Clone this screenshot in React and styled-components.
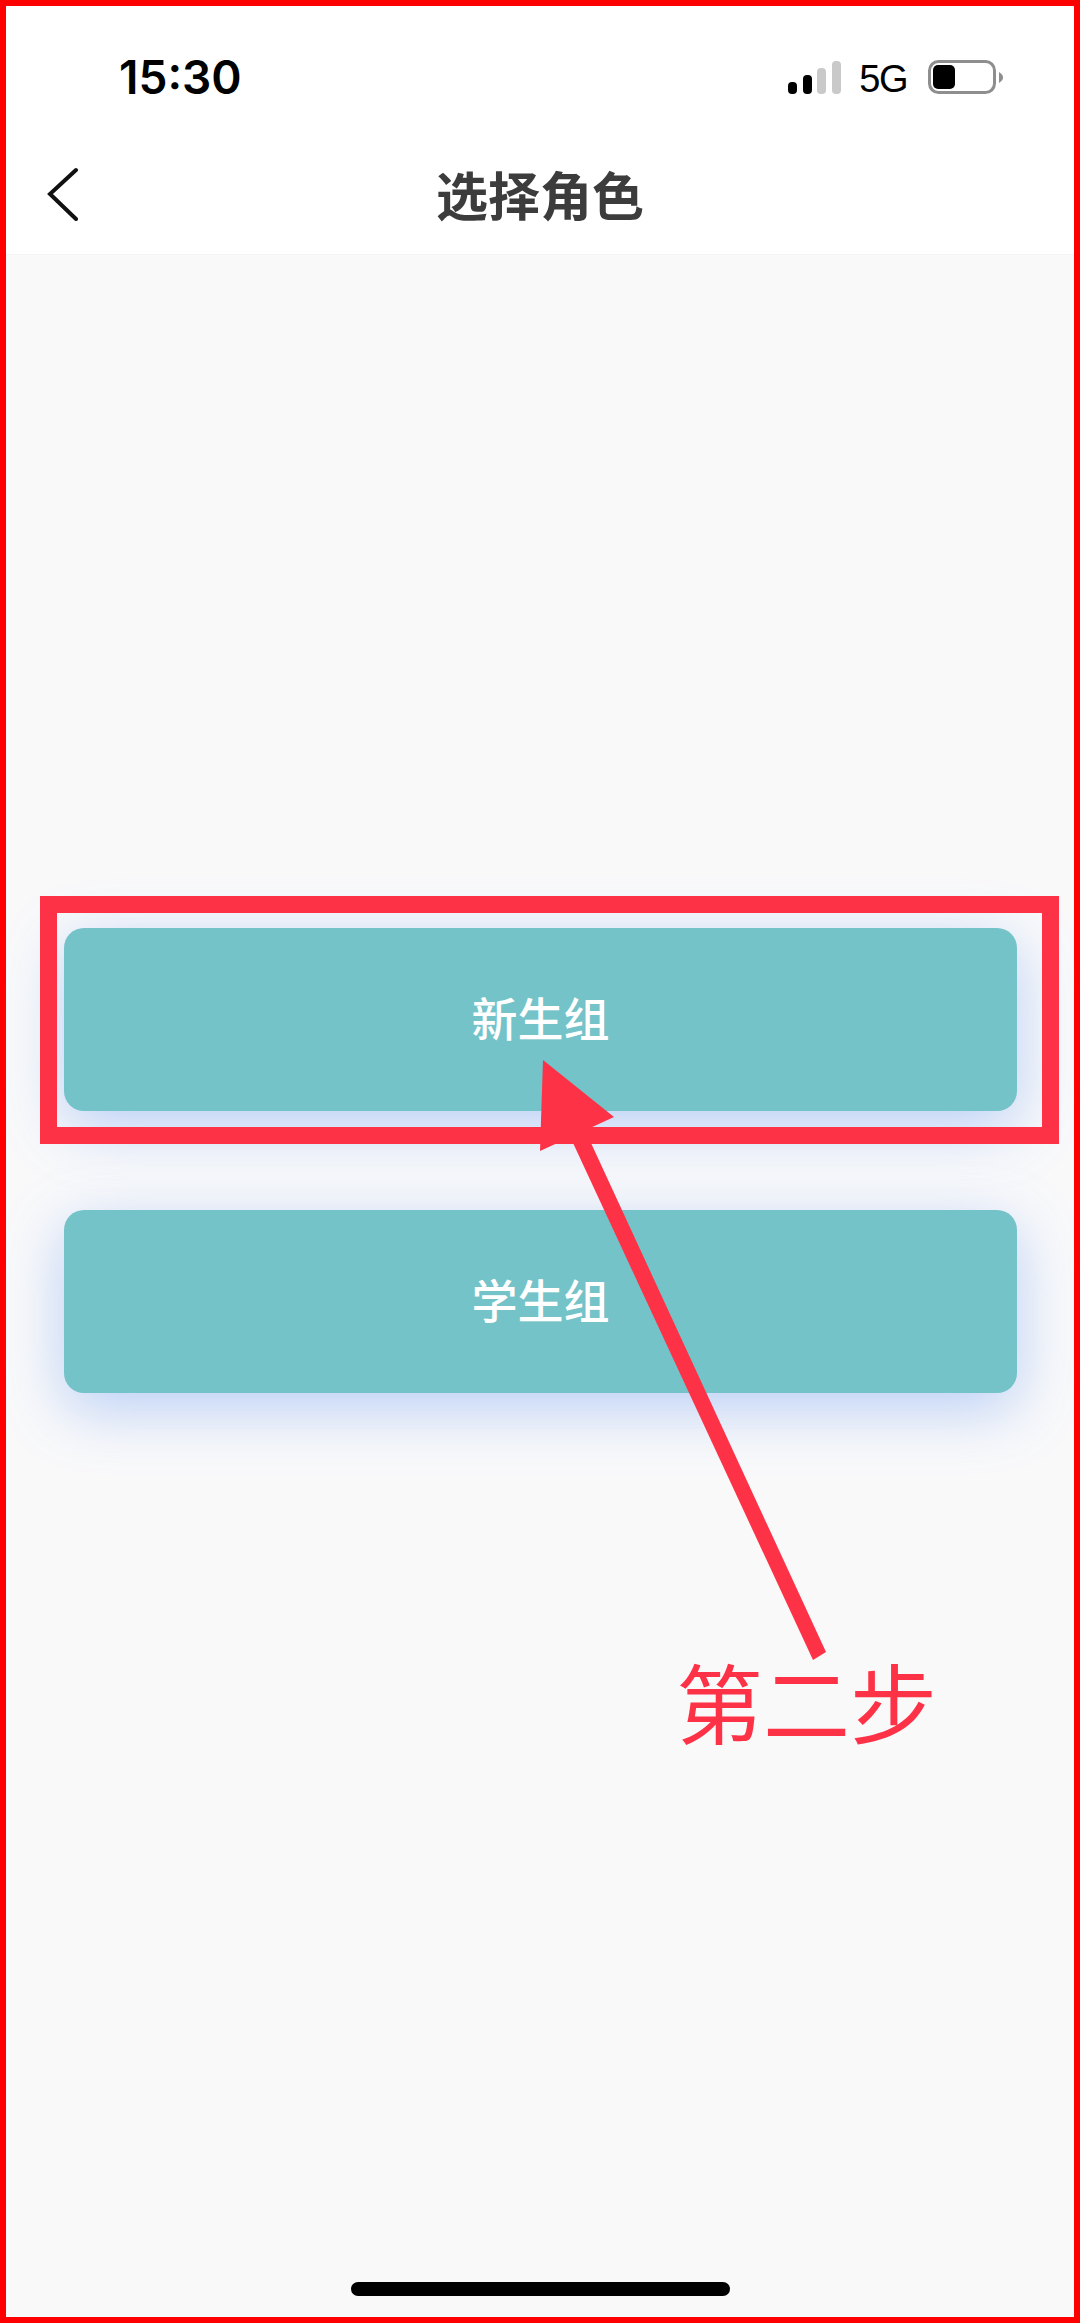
import React from "react";
import styled, { createGlobalStyle } from "styled-components";

const GlobalStyle = createGlobalStyle`
  html, body {
    margin: 0;
    padding: 0;
    background: #fff;
  }
  * {
    box-sizing: border-box;
  }
`;

const CJK = `"Noto Sans CJK SC", "Noto Sans", sans-serif`;

const Page = styled.div`
  position: relative;
  width: 1080px;
  height: 2323px;
  overflow: hidden;
`;

const Frame = styled.div`
  display: flex;
  flex-direction: column;
  width: 100%;
  height: 100%;
  border: 6px solid #ff0000;
  background: #f9f9fa;
`;

const Header = styled.header`
  background: #fff;
  border-bottom: 1px solid #f4f4f4;
`;

const StatusBar = styled.div`
  display: flex;
  justify-content: space-between;
  align-items: center;
  padding: 48px 71px 0 113px;
`;

const Time = styled.span`
  font-family: Inter, "Liberation Sans", sans-serif;
  font-size: 46px;
  line-height: 46px;
  font-weight: 600;
  color: #000;
`;

const StatusIcons = styled.div`
  display: flex;
  align-items: center;
  height: 46px;
`;

const NetworkLabel = styled.span`
  margin: 3px 21px 0 18px;
  font-family: "Liberation Sans", sans-serif;
  font-size: 38px;
  line-height: 46px;
  letter-spacing: -1.5px;
  color: #000;
`;

const NavBar = styled.nav`
  display: grid;
  grid-template-columns: 1fr auto 1fr;
  align-items: center;
  height: 154px;
  padding: 34px 41px 0;
`;

const Title = styled.h1`
  margin: 0;
  font-family: ${CJK};
  font-size: 52px;
  line-height: 60px;
  font-weight: 700;
  color: #3c3c3c;
`;

const Main = styled.main`
  flex: 1;
  display: flex;
  flex-direction: column;
  gap: 99px;
  padding: 673px 57px 0 58px;
`;

const RoleWrap = styled.div`
  position: relative;
`;

const RoleButton = styled.button`
  display: flex;
  align-items: center;
  justify-content: center;
  width: 100%;
  height: 183px;
  padding: 0 0 8px;
  border: none;
  border-radius: 20px;
  background: #74c3c9;
  box-shadow: 0 16px 60px rgba(90, 145, 240, 0.4);
  font-family: ${CJK};
  font-size: 46px;
  font-weight: 500;
  color: #fff;
`;

const Highlight = styled.div`
  position: absolute;
  top: -32px;
  right: -42px;
  bottom: -33px;
  left: -24px;
  border: 17px solid #fe3246;
`;

const HomeIndicator = styled.div`
  align-self: center;
  flex-shrink: 0;
  width: 379px;
  height: 14px;
  margin-bottom: 21px;
  border-radius: 7px;
  background: #000;
`;

const ArrowLayer = styled.svg`
  position: absolute;
  top: 0;
  left: 0;
`;

const StepLabel = styled.div`
  position: absolute;
  top: 1639px;
  left: 676px;
  font-family: ${CJK};
  font-size: 87px;
  line-height: 122px;
  font-weight: 400;
  color: #fe3246;
`;

const SignalIcon = () => (
  <svg width="53" height="33" viewBox="0 0 53 33">
    <rect x="0" y="21" width="9" height="12" rx="4" fill="#000" />
    <rect x="15" y="14" width="9" height="19" rx="4" fill="#000" />
    <rect x="29" y="7" width="9" height="26" rx="4" fill="#c9c9c9" />
    <rect x="44" y="0" width="9" height="33" rx="4" fill="#c9c9c9" />
  </svg>
);

const BatteryIcon = () => (
  <svg width="75" height="34" viewBox="0 0 75 34">
    <rect x="1.5" y="1.5" width="65" height="31" rx="9" fill="none" stroke="#8e8e8e" strokeWidth="3" />
    <rect x="5" y="5" width="22" height="24" rx="5" fill="#000" />
    <path d="M71 12 C74 14 75 15.500 75 17.500 C75 19.500 74 21 71 23 Z" fill="#8e8e8e" />
  </svg>
);

const BackIcon = () => (
  <svg width="32" height="54" viewBox="0 0 32 54">
    <path d="M29 3 L3 27 L29 52" fill="none" stroke="#111" strokeWidth="4" strokeLinecap="round" strokeLinejoin="miter" />
  </svg>
);

const App = () => {
  return (
    <Page>
      <GlobalStyle />
      <Frame>
        <Header>
          <StatusBar>
            <Time>15:30</Time>
            <StatusIcons>
              <SignalIcon />
              <NetworkLabel>5G</NetworkLabel>
              <BatteryIcon />
            </StatusIcons>
          </StatusBar>
          <NavBar>
            <BackIcon />
            <Title>选择角色</Title>
          </NavBar>
        </Header>
        <Main>
          <RoleWrap>
            <RoleButton>新生组</RoleButton>
            <Highlight />
          </RoleWrap>
          <RoleWrap>
            <RoleButton>学生组</RoleButton>
          </RoleWrap>
        </Main>
        <HomeIndicator />
      </Frame>
      <ArrowLayer width="1080" height="2323" viewBox="0 0 1080 2323">
        <polygon points="567,1130 585,1130 826,1652 813,1660" fill="#fe3246" />
        <polygon points="543,1060 614,1117 540,1151" fill="#fe3246" />
      </ArrowLayer>
      <StepLabel>第二步</StepLabel>
    </Page>
  );
};

export default App;
